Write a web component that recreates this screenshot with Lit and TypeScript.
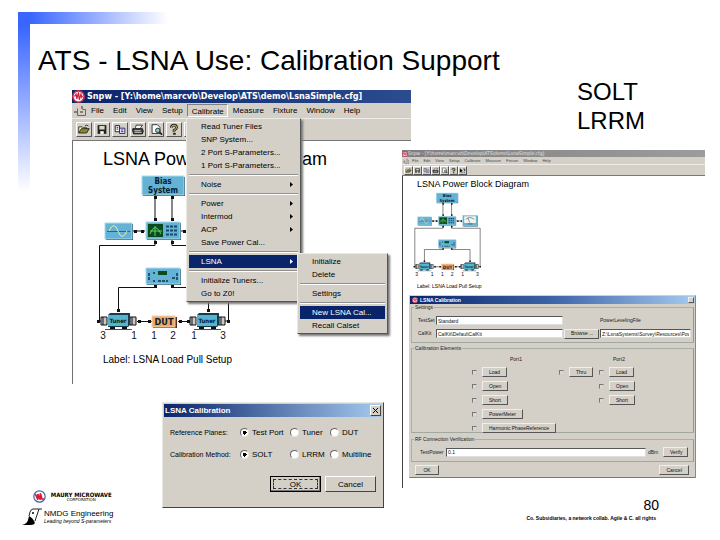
import { LitElement, html, svg, css, nothing } from "lit";
import { customElement, property } from "lit/decorators.js";

/* ---------- toolbar glyphs, each on a 16 x 14 grid ---------- */
const glyphs = [
  { name: "Open", art: svg`<path d="M2 11V4h4l1 1h4v2" fill="#ffffc0" stroke="#222"/><path d="M2 11l3-5h9l-3 5z" fill="#8a8a20" stroke="#222"/><path d="M9 3q2-2 4 0" fill="none" stroke="#222"/>` },
  { name: "Save", art: svg`<path d="M3 2h10v10H3z" fill="#222"/><path d="M5 3h6v4H5z" fill="#d8d8c8"/><path d="M6 9h4v3H6z" fill="#fff"/>` },
  { name: "Copy", art: svg`<path d="M2.500 2.500h5v7h-5z" fill="#fff" stroke="#113"/><path d="M4 4.500h2M4 6.500h2" stroke="#113"/><path d="M7.500 5.500h6v6h-6z" fill="#fff" stroke="#216"/><path d="M9 7.500h3M9 9.500h3" stroke="#216"/>` },
  { name: "Print", art: svg`<path d="M5 5l1-3h7l-2 3" fill="#fff" stroke="#222"/><path d="M2 6h11l1 3-1 3H3L2 9z" fill="#444" stroke="#111"/><path d="M4 8.500h7" stroke="#eee"/><path d="M4 10.500h8" stroke="#ccc"/>` },
  { name: "Preview", art: svg`<path d="M3.500 1.500h6l3 3v7h-9z" fill="#fff" stroke="#222"/><circle cx="10" cy="8" r="2.500" fill="#8cc" stroke="#222"/><path d="M12 10l3 3" stroke="#222" stroke-width="2"/>` },
  { name: "Help", art: svg`<path d="M5 5q0-3 3-3t3 3q0 1-3 3v2" fill="none" stroke="#222" stroke-width="3"/><path d="M5 5q0-3 3-3t3 3q0 1-3 3v2" fill="none" stroke="#e8dc60"/><path d="M7 11h3v2H7z" fill="#222"/>` },
  { name: "Context help", art: svg`<path d="M2 2v10l3-3 2 4 1-1-2-4h3z" fill="#111"/><path d="M10 4q1-2 3 0t-1 4M12 10v2" fill="none" stroke="#111" stroke-width="2"/>` },
];

const maury = svg`<circle cx="8" cy="8" r="7" fill="#fff" stroke="#c22846" stroke-width="2"/><path d="M3 8l2-3 1 6 2-8 1 9 2-7 1 4 1-2" fill="none" stroke="#d01c3c" stroke-width="1.500"/>`;

const tuner = (x: number) => svg`
  <g transform="translate(${x} 0)">
    <path d="M0 318h6v8H0zM29 318h6v8h-6z" fill="#c9c9c9" stroke="#111"/>
    <path d="M2 318v8M31 318v8" stroke="#111"/>
    <path d="M7 316l2-2h20v12l-2 2H7z" fill="#173c4c"/>
    <path d="M7 316h20v11H7z" fill="#55b4d0"/>
    <path d="M9 329h5M21 329h5" stroke="#111" stroke-width="2"/>
    <path d="M4 330.500h27" stroke="#246078"/>
    <text x="17" y="324" class="tag" font-size="6">Tuner</text>
  </g>`;

const box = (x: number, y: number, w: number, h: number) => svg`
  <rect x=${x + 1} y=${y + 1} width=${w} height=${h} fill="#123646"/>
  <rect x=${x} y=${y} width=${w} height=${h} fill="#64b2d6" stroke="#a9dbee"/>`;

@customElement("block-diagram")
export class BlockDiagram extends LitElement {
  static styles = css`
    :host { display: block; }
    svg { display: block; width: 100%; height: auto; }
    text { font-family: "Liberation Sans", Arial, sans-serif; text-anchor: middle; fill: #111; }
    .tag { font-family: "DejaVu Sans Condensed", sans-serif; font-weight: bold; fill: #06202c; }
  `;
  render() {
    const dots = [[155, 198], [172, 198], [155, 220], [172, 220], [135, 232], [142, 232], [184, 232], [191, 232], [155, 243], [172, 243],
      [155, 287], [172, 287], [118, 311], [208, 311], [139, 322], [149, 322], [180, 322], [188, 322], [98, 322], [228, 322]];
    return html`<svg viewBox="90 171 150 174" role="img" aria-label="Power block diagram">
      <g fill="none" stroke="#111">
        <path d="M155 196v26M172 196v26M133 232h12M181 232h12"/>
        <path d="M155 241v5.500H99.500V322h4M172 241v5.500h56.500V322h-4"/>
        <path d="M155 286v2.500h-36.500V313M172 286v2.500h36.500V313"/>
        <path d="M137 322.500h15M178 322.500h13"/>
      </g>
      ${dots.map(([x, y]) => svg`<rect x=${x - 1} y=${y - 1} width="3" height="3" fill="#111"/>`)}
      ${box(142, 177, 42, 19)}
      <text x="163" y="185" class="tag" font-size="8">Bias</text>
      <text x="163" y="194" class="tag" font-size="8">System</text>
      ${box(105, 224, 27, 16)}
      <path d="M107 232.500h23" stroke="#a33a2c"/>
      <path d="M109 232q5-11 9 0t9 0" fill="none" stroke="#e8f0a0"/>
      ${box(146, 223, 34, 17)}
      <rect x="148" y="225" width="15" height="13" fill="#0b4a1c"/>
      <path d="M150 235q5-13 11 0M150 232h12M155 227v10" fill="none" stroke="#5fd06a"/>
      <path d="M166 227.500h12M166 231.500h12M166 235.500h12" stroke="#174a66" stroke-width="2" stroke-dasharray="3 1"/>
      ${box(194, 221, 29, 21)}
      <rect x="197" y="223" width="23" height="13" fill="#f4f4f0"/>
      <path d="M200 229q8-7 17 0M208 235l-4-9M204 238h9" fill="none" stroke="#333"/>
      ${box(146, 269, 34, 16)}
      <rect x="158" y="272" width="9" height="4" fill="#0b4a1c"/>
      <path d="M149 274v7M153 274h2M153 282h2M158 282h10M172 279h3M177 274v7" stroke="#123646" stroke-width="1.500" stroke-dasharray="3 1"/>
      ${tuner(101)}${tuner(190)}
      <rect x="153" y="318" width="24" height="11" fill="#5a2c12"/>
      <rect x="152" y="317" width="23" height="11" fill="#f0a868" stroke="#f8d0a8"/>
      <text x="164" y="326" class="tag" font-size="9">DUT</text>
      ${[["3", 103], ["1", 134], ["1", 154], ["2", 173], ["1", 194], ["3", 223]].map(([t, x]) => svg`<text x=${x} y="340" font-size="10">${t}</text>`)}
    </svg>`;
  }
}

@customElement("snpw-window")
export class SnpwWindow extends LitElement {
  @property({ type: Boolean, reflect: true }) mini = false;
  static styles = css`
    :host { display: block; position: relative; font: 8px/13px "Liberation Sans", Arial, sans-serif; color: #000; }
    button { font: inherit; color: inherit; border: 0; padding: 0; margin: 0; background: none; text-align: left; white-space: nowrap; }
    svg { display: block; }
    .title { display: flex; align-items: center; gap: 2px; height: 13px; background: linear-gradient(90deg, #0a246a, #2c4c90); color: #fff; font: bold 9px/13px "DejaVu Sans Condensed", "Liberation Sans", sans-serif; white-space: pre; overflow: hidden; }
    .logo { width: 13px; height: 13px; }
    .menubar { display: flex; align-items: center; height: 15px; background: #d4d0c8; padding-left: 2px; }
    .sys { width: 12px; height: 11px; }
    .menubar button { height: 13px; padding: 0 4px 0 5px; }
    .menubar .open { border: 1px solid; border-color: #808080 #fff #fff #808080; padding: 0 3px 0 4px; line-height: 13px; }
    .toolbar { display: flex; align-items: center; gap: 2px; height: 23px; padding-left: 4px; background: #d4d0c8; border-top: 1px solid #eeece8; border-bottom: 1px solid #777; box-sizing: border-box; }
    .toolbar button { width: 16px; height: 15px; box-sizing: border-box; border: 1px solid; border-color: #fff #555 #555 #fff; }
    .toolbar svg { width: 100%; height: 100%; }
    .body { background: #fff; border-left: 1px solid #707070; padding: 7px 0 17px; }
    h2 { margin: 0 0 0 30px; font-size: 18px; font-weight: normal; line-height: 22px; white-space: nowrap; }
    block-diagram { width: 150px; margin-left: 17px; }
    .caption { margin: 9px 0 0 30px; font-size: 10px; line-height: 14px; white-space: nowrap; }

    :host([mini]) { font-size: 5px; line-height: 7px; }
    :host([mini]) .title { height: 7px; gap: 0; background: linear-gradient(90deg, #808080, #9c9c9c); color: #e4e4e4; font: 5px/7px "DejaVu Sans Condensed", sans-serif; }
    :host([mini]) .logo { width: 6px; height: 6px; }
    :host([mini]) .menubar { height: 7px; padding-left: 1px; color: #444; font-size: 4px; }
    :host([mini]) .sys { width: 6px; height: 6px; }
    :host([mini]) .menubar button { height: 7px; padding: 0 2px 0 3px; line-height: 7px; }
    :host([mini]) .toolbar { height: 12px; padding-left: 2px; gap: 0; }
    :host([mini]) .toolbar button { width: 9px; height: 9px; }
    :host([mini]) .body { padding: 3px 0 10px; border-color: #444; }
    :host([mini]) h2 { margin-left: 14px; font-size: 9px; line-height: 11px; }
    :host([mini]) block-diagram { width: 76px; margin-left: 7px; }
    :host([mini]) .caption { margin: 4px 0 0 14px; font-size: 5px; line-height: 8px; }

    .menu { position: absolute; box-sizing: border-box; background: #d4d0c8; border: 1px solid; border-color: #eceae4 #555 #555 #eceae4; padding: 1px 2px; box-shadow: 2px 2px 2px #777; }
    .main { left: 114px; top: 28px; width: 115px; }
    .sub { left: 225px; top: 163px; width: 91px; }
    .menu button { display: flex; justify-content: space-between; align-items: center; width: 100%; height: 13px; padding: 0 5px 0 12px; }
    .menu .on { background: #0a246a; color: #fff; }
    .menu hr { margin: 2px 0; border: 0; height: 2px; background: linear-gradient(#909090 50%, #fff 50%); }
    .arrow { width: 3px; height: 5px; }
  `;
  private items(list: string[], chosen: string, parents: string[]) {
    return list.map((t) => t === "-" ? html`<hr>` : html`<button role="menuitem" class=${t === chosen ? "on" : ""}>${t}
      ${parents.includes(t) ? html`<svg class="arrow" viewBox="0 0 3 5"><path d="M0 0l3 2.500L0 5z" fill="currentColor"/></svg>` : nothing}</button>`);
  }
  render() {
    return html`
      <div class="title"><svg class="logo" viewBox="0 0 16 16">${maury}</svg><span>Snpw - [Y:\\home\\marcvb\\Develop\\ATS\\demo\\LsnaSimple.cfg]</span></div>
      <div class="menubar">
        <svg class="sys" viewBox="0 0 12 11"><path d="M3.500 3.500v7h8v-6h-3" fill="none" stroke="#666"/><path d="M0 7h3M8 1v3M6 7h3" stroke="#333"/></svg>
        ${["File", "Edit", "View", "Setup", "Calibrate", "Measure", "Fixture", "Window", "Help"].map((t) =>
          html`<button class=${t === "Calibrate" && !this.mini ? "open" : ""}>${t}</button>`)}
      </div>
      <div class="toolbar">${glyphs.map((g) => html`<button aria-label=${g.name}><svg viewBox="0 0 16 14">${g.art}</svg></button>`)}</div>
      <div class="body">
        <h2>LSNA Power Block Diagram</h2>
        <block-diagram></block-diagram>
        <p class="caption">Label: LSNA Load Pull Setup</p>
        <slot></slot>
      </div>
      ${this.mini ? nothing : html`
        <div class="menu main" role="menu">${this.items(
          ["Read Tuner Files", "SNP System...", "2 Port S-Parameters...", "1 Port S-Parameters...", "-", "Noise", "-", "Power", "Intermod", "ACP", "Save Power Cal...", "-", "LSNA", "-", "Initialize Tuners...", "Go to Z0!"],
          "LSNA", ["Noise", "Power", "Intermod", "ACP", "LSNA"])}</div>
        <div class="menu sub" role="menu">${this.items(
          ["Initialize", "Delete", "-", "Settings", "-", "New LSNA Cal...", "Recall Calset"], "New LSNA Cal...", [])}</div>`}
    `;
  }
}

@customElement("method-dialog")
export class MethodDialog extends LitElement {
  static styles = css`
    :host { display: block; box-sizing: border-box; background: #d4d0c8; border: 1px solid; border-color: #e8e6e0 #444 #444 #e8e6e0; padding: 1px; font: 8px/13px "Liberation Sans", Arial, sans-serif; }
    .title { display: flex; justify-content: space-between; align-items: center; height: 13px; padding: 0 1px; background: linear-gradient(90deg, #0a246a, #a6caf0); color: #fff; font: bold 8px/13px "Liberation Sans", Arial, sans-serif; }
    button { font: inherit; padding: 0; box-sizing: border-box; background: #d4d0c8; border: 1px solid; border-color: #fff #444 #444 #fff; color: #000; }
    .close { width: 11px; height: 11px; }
    .close svg { display: block; width: 9px; height: 9px; }
    form { display: flex; flex-direction: column; gap: 9px; padding: 9px 6px 14px; }
    fieldset { display: grid; grid-template-columns: 70px 50px 40px 1fr; align-items: center; border: 0; margin: 0; padding: 0; min-width: 0; white-space: nowrap; }
    .name { font-size: 7px; }
    label { display: flex; align-items: center; gap: 3px; }
    input { appearance: none; box-sizing: border-box; width: 9px; height: 9px; margin: 0; border-radius: 50%; background: #fff; border: 1px solid; border-color: #666 #e8e6e0 #e8e6e0 #666; }
    input:checked { background: radial-gradient(circle, #000 0 2px, #fff 2px); }
    .actions { display: flex; justify-content: flex-end; gap: 4px; padding-top: 6px; }
    .actions button { width: 51px; height: 16px; }
    .actions .default { border-color: #000; outline: 1px dashed #333; outline-offset: -4px; box-shadow: inset -1px -1px #777; }
  `;
  private row(name: string, options: string[]) {
    return html`<fieldset role="radiogroup" aria-label=${name}><span class="name">${name}</span>${options.map((o, i) =>
      html`<label><input type="radio" name=${name} ?checked=${i === 0}>${o}</label>`)}</fieldset>`;
  }
  render() {
    return html`
      <div class="title">LSNA Calibration<button class="close" aria-label="Close"><svg viewBox="0 0 9 9"><path d="M2 2l5 5M7 2l-5 5" stroke="#000"/></svg></button></div>
      <form>
        ${this.row("Reference Planes:", ["Test Port", "Tuner", "DUT"])}
        ${this.row("Calibration Method:", ["SOLT", "LRRM", "Multiline"])}
        <div class="actions"><button type="button" class="default">OK</button><button type="button">Cancel</button></div>
      </form>`;
  }
}

@customElement("elements-dialog")
export class ElementsDialog extends LitElement {
  static styles = css`
    :host { display: block; box-sizing: border-box; background: #d4d0c8; border: 1px solid; border-color: #d4d0c8 #7c8ca0 #6c7c90 #d4d0c8; font: 5px/7px "Liberation Sans", Arial, sans-serif; color: #222; }
    .title { display: flex; align-items: center; gap: 2px; height: 8px; padding: 0 1px 0 2px; background: linear-gradient(90deg, #0a246a, #3c64a8 50%, #a6caf0); color: #fff; font-weight: bold; }
    .title svg { width: 6px; height: 6px; }
    .title span { flex: 1; }
    button { font: inherit; padding: 0 6px; height: 10px; min-width: 24px; box-sizing: border-box; background: #d4d0c8; border: 1px solid; border-color: #eee #555 #555 #eee; color: #111; white-space: nowrap; }
    .title button { min-width: 6px; width: 6px; height: 6px; padding: 0; line-height: 3px; }
    fieldset { margin: 0 1px; padding: 0 2px; min-width: 0; border: 1px solid; border-color: #a8b0a8 #909890 #a0a8a0 #a8b0a8; }
    legend { padding: 0 1px; line-height: 7px; }
    input { font: inherit; box-sizing: border-box; min-width: 0; width: 100%; height: 9px; padding: 0 1px; background: #fff; border: 1px solid; border-color: #555 #ddd #ddd #555; border-radius: 0; margin: 0; color: #111; }
    input[type="checkbox"] { appearance: none; width: 5px; height: 5px; padding: 0; background: #dcd8d0; border-color: #777 #ccc #ccc #777; }
    .settings { display: grid; grid-template-columns: 17px 127fr 35px 91fr; align-items: center; gap: 3px 1px; padding: 5px 0 3px 4px; height: 23px; }
    .file { grid-column: 4; }
    .grid { display: grid; grid-template-columns: 87px 40px 1fr; height: 80px; padding-left: 58px; }
    .col { display: flex; flex-direction: column; align-items: flex-start; gap: 4px; padding-top: 4px; }
    .thru { padding-top: 15px; }
    .head { margin-left: 14px; line-height: 7px; }
    .first .head { margin-left: 38px; }
    .check { display: flex; align-items: center; gap: 5px; }
    .power { display: grid; grid-template-columns: 24px 1fr 13px 25px; align-items: center; gap: 2px; padding: 4px 3px 4px 6px; }
    .calib { margin-top: 2px; }
    .rf { margin-top: 3px; }
    .actions { display: flex; justify-content: space-between; padding: 3px 6px 2px 5px; }
    .actions .cancel { min-width: 28px; }
  `;
  private check(t: string, port = "") {
    return html`<div class="check"><input type="checkbox" aria-label="${t} ${port}"><button>${t}</button></div>`;
  }
  render() {
    return html`
      <div class="title"><svg viewBox="0 0 16 16">${maury}</svg><span>LSNA Calibration</span><button aria-label="Close"></button></div>
      <fieldset><legend>Settings</legend>
        <div class="settings">
          <label for="set">TestSet</label><input id="set" value="Standard">
          <label class="file" for="file">PowerLevelingFile</label>
          <label for="kit">CalKit</label><input id="kit" value="CalKit\\DefaultCalKit"><button>Browse ...</button>
          <input id="file" value="Z:\\LsnaSystems\\Survey\\Resources\\PowerL">
        </div>
      </fieldset>
      <fieldset class="calib"><legend>Calibration Elements</legend>
        <div class="grid">
          <div class="col first"><span class="head">Port1</span>${["Load", "Open", "Short", "PowerMeter", "Harmonic PhaseReference"].map((t) => this.check(t, "port 1"))}</div>
          <div class="col thru">${this.check("Thru")}</div>
          <div class="col"><span class="head">Port2</span>${["Load", "Open", "Short"].map((t) => this.check(t, "port 2"))}</div>
        </div>
      </fieldset>
      <fieldset class="rf"><legend>RF Connection Verification</legend>
        <div class="power"><label for="pow">TestPower</label><input id="pow" value="0.1"><span>dBm</span><button>Verify</button></div>
      </fieldset>
      <div class="actions"><button>OK</button><button class="cancel">Cancel</button></div>`;
  }
}

@customElement("app-root")
export class AppRoot extends LitElement {
  static styles = css`
    :host { display: block; position: relative; box-sizing: border-box; min-height: 100vh; background: #fff; color: #000; font-family: "Liberation Sans", Arial, sans-serif; overflow: hidden; }
    .rail { position: absolute; left: 18px; top: 12px; }
    .across { width: 150px; height: 12px; background: linear-gradient(90deg, #3a66ff 8%, #fff); }
    .down { width: 12px; height: 180px; background: linear-gradient(#3a66ff 8%, #fff); }
    h1 { position: relative; margin: 0; padding: 45px 0 0 38px; font-size: 28px; font-weight: normal; line-height: 32px; white-space: nowrap; }
    main { display: grid; grid-template-columns: 330fr 303fr; padding: 0 15px 0 72px; }
    .left { padding-top: 13px; margin-right: -9px; min-width: 0; }
    .left method-dialog { margin: 18px 27px 0 90px; }
    .right { display: flex; flex-direction: column; gap: 15px; min-width: 0; position: relative; }
    .notes { margin: 0 0 0 175px; font-size: 24px; line-height: 29px; }
    elements-dialog { margin: 5px 9px 0 6px; }
    footer { display: flex; justify-content: space-between; margin-top: -18px; padding: 0 61px 0 22px; }
    .brands { display: grid; grid-template-columns: 22px auto; align-content: start; align-items: center; row-gap: 5px; }
    .brands svg { display: block; }
    .maury { width: 13px; height: 13px; margin-left: 11px; }
    .nmdg { width: 21px; height: 18px; }
    .name { margin-left: 5px; font: bold 6px/6px "DejaVu Sans Condensed", "DejaVu Sans", sans-serif; text-align: center; }
    .name small { display: block; font: 4px/4px "DejaVu Sans", sans-serif; }
    .eng { font-size: 8px; line-height: 9px; white-space: nowrap; }
    .eng small { display: block; font-size: 5px; font-style: italic; line-height: 7px; }
    .end { display: flex; flex-direction: column; align-items: flex-end; gap: 2px; padding-top: 7px; }
    .page { font-size: 14px; line-height: 16px; }
    .legal { font-size: 5px; font-weight: bold; line-height: 6px; margin-right: 3px; white-space: nowrap; }
  `;
  render() {
    return html`
      <div class="rail down"></div><div class="rail across"></div>
      <h1>ATS - LSNA Use: Calibration Support</h1>
      <main>
        <div class="left">
          <snpw-window></snpw-window>
          <method-dialog></method-dialog>
        </div>
        <div class="right">
          <p class="notes">SOLT<br>LRRM</p>
          <snpw-window mini><elements-dialog></elements-dialog></snpw-window>
        </div>
      </main>
      <footer>
        <div class="brands">
          <svg class="maury" viewBox="0 0 16 16"><circle cx="8" cy="8" r="7" fill="#fff" stroke="#4464a8" stroke-width="1.500"/><path d="M3 5l3 7V5l3 7V4l2 7h3" fill="none" stroke="#d81c34" stroke-width="2"/></svg>
          <div class="name">MAURY MICROWAVE<small>CORPORATION</small></div>
          <svg class="nmdg" viewBox="0 0 21 18"><path d="M0 17h9q3 0 4-3l4-13H11Q9 1 8 4L6 13q-1 3-6 4z" fill="#fff"/><path d="M0 17q5-1 6-5l1-4q4 2 6 7-1 2-4 2z" fill="#000"/><path d="M7 8l1-4q1-3 3-3h9M13 13l4-12" fill="none" stroke="#222"/><circle cx="11" cy="5" r="1" fill="#000"/></svg>
          <div class="eng">NMDG Engineering<small>Leading beyond S-parameters</small></div>
        </div>
        <div class="end">
          <span class="page">80</span>
          <span class="legal">Co. Subsidiaries, a network collab. Agile &amp; C. all rights</span>
        </div>
      </footer>`;
  }
}
